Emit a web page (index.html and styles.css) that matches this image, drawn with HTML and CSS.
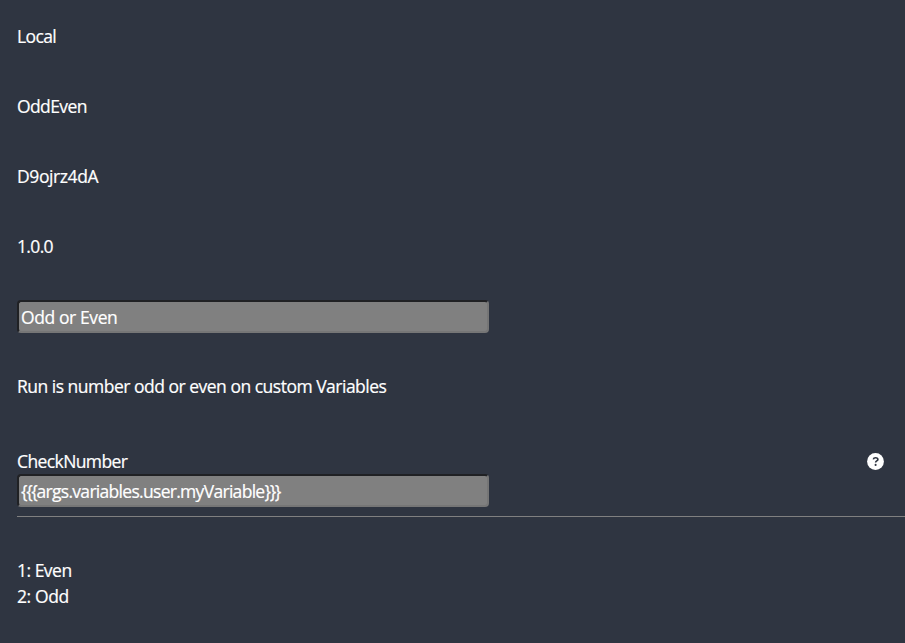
FILE: index.html
```html
<!DOCTYPE html>
<html lang="en">
<head>
<meta charset="utf-8">
<title>OddEven</title>
<link rel="stylesheet" href="styles.css">
</head>
<body>
<main class="panel">
  <p class="row"><span class="t local">Local</span></p>
  <p class="row"><span class="t name">OddEven</span></p>
  <p class="row"><span class="t id">D9ojrz4dA</span></p>
  <p class="row"><span class="t version">1.0.0</span></p>
  <div class="field title-field"><span class="t title">Odd or Even</span></div>
  <p class="description"><span class="t desc">Run is number odd or even on custom Variables</span></p>
  <section class="argument">
    <div class="argument-head">
      <span class="t label">CheckNumber</span>
      <svg class="help" viewBox="0 0 17 17" aria-label="Help"><circle cx="8.500" cy="8.500" r="8.400" fill="#fff"/><path d="M6.300 6.300C6.500 5.200 7.300 4.700 8.600 4.700c1.400 0 2.300.7 2.300 1.700 0 1.500-2.300 1.500-2.300 3" fill="none" stroke="#2f3541" stroke-width="1.600"/><circle cx="8.600" cy="11.900" r="1.050" fill="#2f3541"/></svg>
    </div>
    <div class="field"><span class="t variable"><span class="brace">{{{</span>args.variables.user.myVariable<span class="brace">}}}</span></span></div>
  </section>
  <ol class="results">
    <li><span class="t even">1: Even</span></li>
    <li><span class="t odd">2: Odd</span></li>
  </ol>
</main>
</body>
</html>
```

FILE: styles.css
```css
* { box-sizing: border-box; }
body { margin: 0; background: #2f3541; color: #fff; font: 17.5px/26px "Open Sans", "Noto Sans", sans-serif; }
.panel { height: 643px; padding: 23px 0 0 17px; overflow: hidden; }
.row { height: 26px; margin: 0 0 44px; }
.t { display: inline-block; white-space: nowrap; letter-spacing: -0.5px; -webkit-text-stroke: 0.2px #fff; }
.local, .name, .label { letter-spacing: -0.6px; }
.id { letter-spacing: -0.4px; }
.version { letter-spacing: -0.65px; }
.title, .odd { letter-spacing: -0.4px; }
.variable { letter-spacing: -0.7px; }
.brace { letter-spacing: -1.4px; }
.field { width: 472px; height: 33px; padding: 2px; background: #808080; border: 2px solid; border-color: #202124 #767676 #767676 #202124; border-radius: 4px; }
.title-field { margin-top: -3px; }
.description { margin: 40px 0 49px; height: 26px; }
.argument { border-bottom: 1px solid #808080; padding-bottom: 9px; }
.argument-head { display: flex; justify-content: space-between; align-items: center; height: 26px; padding-right: 21px; }
.help { width: 17px; height: 17px; }
.results { list-style: none; padding: 0; margin: 40px 0 0; }
```
